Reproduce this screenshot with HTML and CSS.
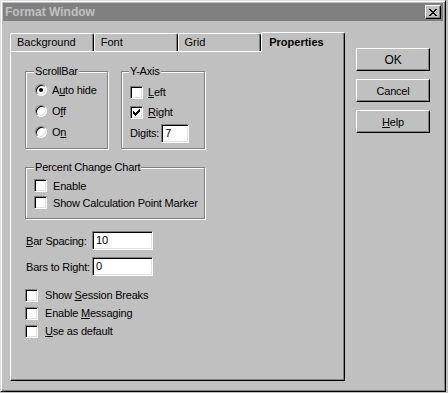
FILE: index.html
```html
<html>
  <head>
    <title>Format Window</title>
    <link rel="stylesheet" href="styles.css">
  </head>
  <body>
    <div class="window">
      <div class="titlebar">
        <span class="title">Format Window</span>
        <span class="close">
          <svg width="8" height="7" viewBox="0 0 8 7">
            <path d="M0 0h2v1h1v1h2v-1h1v-1h2v1h-1v1h-1v1h-1v1h1v1h1v1h1v1h-2v-1h-1v-1h-2v1h-1v1h-2v-1h1v-1h1v-1h1v-1h-1v-1h-1v-1h-1z" fill="#000"/>
          </svg>
        </span>
      </div>
      <div class="client">
        <div class="tabs-area">
          <div class="tabs">
            <div class="tab">Background</div>
            <div class="tab">Font</div>
            <div class="tab">Grid</div>
            <div class="tab selected">Properties</div>
          </div>
          <div class="panel">
            <div class="top-row">
              <fieldset class="group scrollbar">
                <legend>ScrollBar</legend>
                <label class="opt"><span class="radio checked"></span><span>A<u>u</u>to hide</span></label>
                <label class="opt"><span class="radio"></span><span>O<u>f</u>f</span></label>
                <label class="opt"><span class="radio"></span><span>O<u>n</u></span></label>
              </fieldset>
              <fieldset class="group yaxis">
                <legend>Y-Axis</legend>
                <label class="chk"><span class="box"></span><span><u>L</u>eft</span></label>
                <label class="chk"><span class="box">
                  <svg width="7" height="7" viewBox="0 0 7 7"><path d="M0 2h1v1h1v1h1v-1h1v-1h1v-1h1v-1h1v3h-1v1h-1v1h-1v1h-1v1h-1v-1h-1v-1h-1z" fill="#000"/></svg>
                </span><span><u>R</u>ight</span></label>
                <div class="digits"><span>Digits:</span><span class="field small">7</span></div>
              </fieldset>
            </div>
            <fieldset class="group percent">
              <legend>Percent Change Chart</legend>
              <label class="chk tight"><span class="box"></span><span>Enable</span></label>
              <label class="chk tight"><span class="box"></span><span>Show Calculation Point Marker</span></label>
            </fieldset>
            <div class="field-row first"><span class="field-label"><u>B</u>ar Spacing:</span><span class="field wide">10</span></div>
            <div class="field-row"><span class="field-label">Bars to Right:</span><span class="field wide">0</span></div>
            <div class="checks">
              <label class="chk line"><span class="box"></span><span>Show <u>S</u>ession Breaks</span></label>
              <label class="chk line"><span class="box"></span><span>Enable <u>M</u>essaging</span></label>
              <label class="chk line"><span class="box"></span><span><u>U</u>se as default</span></label>
            </div>
          </div>
        </div>
        <div class="buttons">
          <div class="btn ok">OK</div>
          <div class="btn">Cancel</div>
          <div class="btn"><span><u>H</u>elp</span></div>
        </div>
      </div>
    </div>
  </body>
</html>
```
FILE: styles.css
```css
/* Win95 style dialog */
* {
  box-sizing: border-box;
}

body {
  margin: 0;
  background-color: #c0c0c0;
  font-family: "Liberation Sans", Arial, sans-serif;
  font-size: 11px;
  letter-spacing: -0.2px;
  color: #000;
  white-space: nowrap;
}

u {
  text-decoration-thickness: 1px;
  text-underline-offset: 1px;
}

.window {
  width: 446px;
  height: 392px;
  border: 1px solid;
  border-color: #dfdfdf #000 #000 #dfdfdf;
  box-shadow: inset 1px 1px #fff, inset -1px -1px #808080;
  padding: 2px;
  display: flex;
  flex-direction: column;
}

.titlebar {
  height: 18px;
  background-color: #808080;
  color: #c0c0c0;
  display: flex;
  align-items: center;
  justify-content: space-between;
  padding: 0 2px;
}

.title {
  font-weight: bold;
  font-size: 12px;
  letter-spacing: 0;
}

.close {
  width: 16px;
  height: 14px;
  background-color: #c0c0c0;
  border: 1px solid;
  border-color: #fff #000 #000 #fff;
  box-shadow: inset -1px -1px #808080;
  display: flex;
  align-items: center;
  justify-content: center;
}

.client {
  flex: 1;
  display: flex;
  padding: 12px 0 0 7px;
  gap: 11px;
}

.tabs-area {
  width: 335px;
  display: flex;
  flex-direction: column;
}

.tabs {
  display: flex;
  height: 18px;
  align-items: flex-end;
}

.tab {
  width: 84px;
  height: 18px;
  border-top: 1px solid #fff;
  border-left: 1px solid #fff;
  border-right: 1px solid #000;
  box-shadow: inset -1px 0 #808080;
  border-radius: 2px 3px 0 0;
  padding: 2px 0 0 6px;
  letter-spacing: 0;
}

.tab.selected {
  height: 20px;
  margin-bottom: -1px;
  background-color: #c0c0c0;
  position: relative;
  font-weight: bold;
  padding-top: 3px;
  padding-left: 7px;
}

.panel {
  height: 330px;
  border: 1px solid;
  border-color: #fff #000 #000 #fff;
  box-shadow: inset -1px -1px #808080;
  padding: 13px 0 0 14px;
}

.top-row {
  display: flex;
  gap: 13px;
}

.group {
  margin: 0;
  border: 1px solid #808080;
  box-shadow: inset 1px 1px #fff, 1px 1px #fff;
  min-width: 0;
}

.group legend {
  background-color: #c0c0c0;
  padding: 0 1px;
  margin-left: -1px;
  line-height: 13px;
}

.scrollbar {
  width: 83px;
  padding: 1px 4px 6px 9px;
}

.yaxis {
  width: 84px;
  padding: 4px 4px 4px 8px;
}

.percent {
  width: 180px;
  margin-top: 12px;
  padding: 3px 4px 7px 8px;
}

.percent legend {
  margin-left: 0;
}

.opt,
.chk {
  display: flex;
  align-items: center;
  gap: 5px;
  height: 21px;
}

.yaxis .chk {
  height: 20px;
}

.chk.tight {
  height: 17px;
  gap: 6px;
}

.chk.line {
  height: 18px;
  gap: 7px;
}

.radio {
  width: 12px;
  height: 12px;
  border-radius: 50%;
  border: 1px solid;
  border-color: #808080 #fff #fff #808080;
  background-color: #fff;
  box-shadow: inset 1px 1px #000, inset -1px -1px #dfdfdf;
  display: flex;
  align-items: center;
  justify-content: center;
}

.radio.checked::after {
  content: "";
  width: 4px;
  height: 4px;
  border-radius: 50%;
  background-color: #000;
}

.box {
  width: 13px;
  height: 13px;
  flex-shrink: 0;
  border: 1px solid;
  border-color: #808080 #fff #fff #808080;
  background-color: #fff;
  box-shadow: inset 1px 1px #000, inset -1px -1px #dfdfdf;
  display: flex;
  align-items: center;
  justify-content: center;
}

.digits {
  display: flex;
  align-items: center;
  gap: 2px;
  height: 22px;
}

.field {
  height: 19px;
  border: 1px solid;
  border-color: #808080 #fff #fff #808080;
  background-color: #fff;
  box-shadow: inset 1px 1px #000, inset -1px -1px #dfdfdf;
  padding: 2px 0 0 3px;
}

.field.small {
  width: 28px;
}

.field.wide {
  width: 61px;
}

.field-row {
  display: flex;
  align-items: center;
  height: 19px;
  margin-top: 7px;
}

.field-row.first {
  margin-top: 12px;
}

.field-label {
  width: 67px;
  padding-left: 1px;
}

.checks {
  margin-top: 10px;
}

.buttons {
  display: flex;
  flex-direction: column;
  gap: 8px;
  padding-top: 15px;
}

.btn {
  width: 74px;
  height: 23px;
  border: 1px solid;
  border-color: #fff #000 #000 #fff;
  box-shadow: inset -1px -1px #808080;
  display: flex;
  align-items: center;
  justify-content: center;
}

.btn.ok {
  font-size: 12px;
}
```
